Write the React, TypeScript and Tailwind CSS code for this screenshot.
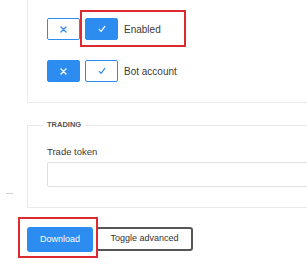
import React from 'react';

const XMark: React.FC<{ color: string }> = ({ color }) => (
  <svg width="7" height="7" viewBox="0 0 7 7">
    <path d="M1 1L6 6M6 1L1 6" stroke={color} strokeWidth="1.3" strokeLinecap="round" />
  </svg>
);

const Check: React.FC<{ color: string }> = ({ color }) => (
  <svg width="8" height="8" viewBox="0 0 8 8">
    <path d="M1.2 4.4L3.1 6.4L6.8 1.4" stroke={color} strokeWidth="1.2" fill="none" strokeLinecap="round" strokeLinejoin="round" />
  </svg>
);

const ToggleButton: React.FC<{ active: boolean; children: React.ReactNode }> = ({ active, children }) => (
  <button
    className={
      active
        ? 'w-[33px] h-[22px] flex items-center justify-center rounded-[2px] border border-[#2d8cf0] bg-[#2d8cf0]'
        : 'w-[33px] h-[22px] flex items-center justify-center rounded-[2px] border border-[#2d8cf0] bg-white'
    }
  >
    {children}
  </button>
);

const SwitchRow: React.FC<{ value: boolean; label: string }> = ({ value, label }) => (
  <div className="flex items-center">
    <ToggleButton active={!value}>
      <XMark color={!value ? '#ffffff' : '#2d8cf0'} />
    </ToggleButton>
    <div className="ml-[5px]">
      <ToggleButton active={value}>
        <Check color={value ? '#ffffff' : '#2d8cf0'} />
      </ToggleButton>
    </div>
    <span className="ml-[6px] text-[10px] text-[#3a3a3a]">{label}</span>
  </div>
);

export default function App() {
  return (
    <div
      className="relative w-[307px] h-[275px] overflow-hidden bg-white"
      style={{ fontFamily: '"Liberation Sans", Arial, sans-serif' }}
    >
      <div className="ml-[27px] w-[300px] border-l border-b border-[#e8eaec] pt-[18px] pb-[20px] pl-[19px] flex flex-col gap-[20px]">
        <SwitchRow value={true} label="Enabled" />
        <SwitchRow value={false} label="Bot account" />
      </div>

      <div className="flex mt-[17px] w-[330px]">
        <div className="w-[27px] shrink-0 flex flex-col justify-end pb-[14px] pl-[6px]">
          <div className="w-[7px] h-[1px] bg-[#d0d0d0]" />
        </div>
        <fieldset className="w-[300px] shrink-0 min-w-0 border-l border-t border-b border-[#e8eaec] pl-[19px] pb-[20px]">
          <legend className="-ml-[4px] px-[4px] text-[7.5px] leading-[10px] font-bold text-[#555]">TRADING</legend>
          <div className="mt-[16px] text-[9.5px] leading-[12px] text-[#3a3a3a]">Trade token</div>
          <input className="mt-[4px] block w-[280px] h-[25px] border border-[#dcdee2] rounded-[2px] bg-white" />
        </fieldset>
      </div>

      <div className="flex items-start mt-[19px] ml-[27px] gap-[3px]">
        <button className="w-[66px] h-[25px] rounded-[3px] bg-[#2d8cf0] text-white text-[9px]">Download</button>
        <button className="w-[97px] h-[24px] rounded-[3px] border-2 border-[#555] bg-white text-[#333] text-[9px]">
          Toggle advanced
        </button>
      </div>

      <div className="absolute left-[80px] top-[10px] w-[106px] h-[37px] border-2 border-[#dc2a30]" />
      <div className="absolute left-[18px] top-[217px] w-[80px] h-[41px] border-2 border-[#dc2a30]" />
    </div>
  );
}
